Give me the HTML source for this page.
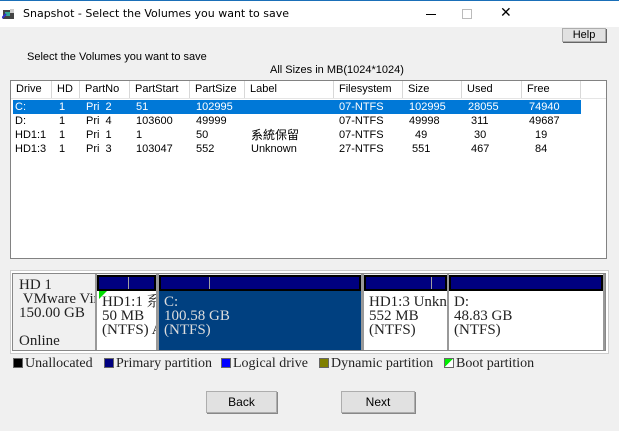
<!DOCTYPE html>
<html><head><meta charset="utf-8"><style>
*{margin:0;padding:0;box-sizing:border-box}
body{width:619px;height:431px;background:#f0f0f0;position:relative;overflow:hidden;font-family:"Liberation Sans","Noto Sans CJK TC",sans-serif;font-size:11px;color:#000}
.a{position:absolute;white-space:nowrap}
.serif{font-family:"Liberation Serif","Noto Serif CJK SC",serif}
.hd{position:absolute;top:81px;height:18px;border-right:1px solid #d8d8d8;padding-left:5px;line-height:17px;background:#fff}
.bar{position:absolute;top:275px;height:16px;background:#000;}
.bar i{position:absolute;left:2px;right:2px;top:2px;bottom:2px;background:#000080}
.bar b{position:absolute;top:2px;bottom:2px;width:1px;background:#a0a0a0}
.pt{position:absolute;top:291px;height:59px;font-size:15px;line-height:14px;padding:4px 0 0 5px;overflow:hidden;white-space:nowrap;font-family:"Liberation Serif","Noto Serif CJK SC",serif;color:#222}
.btn{position:absolute;top:391px;height:22px;background:#e1e1e1;border:1px solid #adadad;box-shadow:1px 1px 0 #888;text-align:center;line-height:20px;font-size:12px}
.lg{position:absolute;top:357px;height:14px;font-size:14px;font-family:"Liberation Serif",serif;color:#222;line-height:14px}
.sq{display:inline-block;width:10px;height:10px;border:1px solid #666;vertical-align:-1px;margin-right:2px}
</style></head><body>
<div class="a" style="left:0;top:0;width:619px;height:1px;background:#1a6fb8"></div>
<div class="a" style="left:0;top:1px;width:619px;height:26px;background:#fff"></div>
<svg class="a" style="left:2px;top:8px" width="14" height="12"><rect x="1" y="2" width="11" height="9" fill="#444"/><rect x="3" y="4" width="5" height="4" fill="#3a9"/><rect x="8" y="1" width="4" height="4" fill="#ccc"/><path d="M0 10l4-4" stroke="#33c" stroke-width="2"/></svg>
<div class="a" style="left:23px;top:7px;font-family:'DejaVu Sans',sans-serif;font-size:11px;color:#000">Snapshot - Select the Volumes you want to save</div>
<div class="a" style="left:426px;top:14px;width:10px;height:1px;background:#000"></div>
<div class="a" style="left:462px;top:9px;width:10px;height:10px;border:1px solid #bbb"></div>
<div class="a" style="left:500px;top:5px;font-size:14px;font-family:'DejaVu Sans',sans-serif;font-weight:200">✕</div>
<div class="btn" style="left:562px;top:28px;width:44px;height:14px;line-height:12px;font-size:11px;box-shadow:1px 1px 0 #666">Help</div>
<div class="a" style="left:27px;top:51px">Select the Volumes you want to save</div>
<div class="a" style="left:270px;top:64px">All Sizes in MB(1024*1024)</div>
<div class="a" style="left:10px;top:80px;width:597px;height:179px;background:#fff;border:1px solid #828282"></div>
<div class="hd" style="left:11px;width:41px">Drive</div>
<div class="hd" style="left:52px;width:28px">HD</div>
<div class="hd" style="left:80px;width:50px">PartNo</div>
<div class="hd" style="left:130px;width:60px">PartStart</div>
<div class="hd" style="left:190px;width:55px">PartSize</div>
<div class="hd" style="left:245px;width:89px">Label</div>
<div class="hd" style="left:334px;width:69px">Filesystem</div>
<div class="hd" style="left:403px;width:59px">Size</div>
<div class="hd" style="left:462px;width:60px">Used</div>
<div class="hd" style="left:522px;width:59px">Free</div>
<div class="a" style="left:11px;top:98px;width:595px;height:1px;background:#e5e5e5"></div>
<div class="a" style="left:13px;top:100px;width:568px;height:14px;background:#0078d7"></div>
<div class="a" style="left:0;top:100px;width:619px;line-height:14px">
<div style="position:relative;height:14px;color:#fff"><span class="a" style="left:15px">C:</span><span class="a" style="left:59px">1</span><span class="a" style="left:86px">Pri&nbsp;&nbsp;2</span><span class="a" style="left:136px">51</span><span class="a" style="left:196px">102995</span><span class="a" style="left:339px">07-NTFS</span><span class="a" style="left:409px">102995</span><span class="a" style="left:468px">28055</span><span class="a" style="left:529px">74940</span></div>
<div style="position:relative;height:14px"><span class="a" style="left:15px">D:</span><span class="a" style="left:59px">1</span><span class="a" style="left:86px">Pri&nbsp;&nbsp;4</span><span class="a" style="left:136px">103600</span><span class="a" style="left:196px">49999</span><span class="a" style="left:339px">07-NTFS</span><span class="a" style="left:409px">49998</span><span class="a" style="left:471px">311</span><span class="a" style="left:529px">49687</span></div>
<div style="position:relative;height:14px"><span class="a" style="left:15px">HD1:1</span><span class="a" style="left:59px">1</span><span class="a" style="left:86px">Pri&nbsp;&nbsp;1</span><span class="a" style="left:136px">1</span><span class="a" style="left:196px">50</span><span class="a" style="left:251px;font-size:12px">系統保留</span><span class="a" style="left:339px">07-NTFS</span><span class="a" style="left:415px">49</span><span class="a" style="left:474px">30</span><span class="a" style="left:535px">19</span></div>
<div style="position:relative;height:14px"><span class="a" style="left:15px">HD1:3</span><span class="a" style="left:59px">1</span><span class="a" style="left:86px">Pri&nbsp;&nbsp;3</span><span class="a" style="left:136px">103047</span><span class="a" style="left:196px">552</span><span class="a" style="left:251px">Unknown</span><span class="a" style="left:339px">27-NTFS</span><span class="a" style="left:412px">551</span><span class="a" style="left:471px">467</span><span class="a" style="left:535px">84</span></div>
</div>
<div class="a" style="left:10px;top:270px;width:599px;height:84px;background:#fff;border:1px solid #ccc"></div>
<div class="a" style="left:12px;top:273px;width:594px;height:78px;background:#f0f0f0;border:1px solid #888"></div>
<div class="a serif" style="left:19px;top:278px;width:76px;overflow:hidden;font-size:15px;line-height:14px;color:#222">HD 1<br>&nbsp;VMware Vir<br>150.00 GB</div>
<div class="a serif" style="left:19px;top:334px;font-size:15px;line-height:15px;color:#222">Online</div>
<div class="a" style="left:95px;top:274px;width:2px;height:76px;background:#999"></div>
<div class="bar" style="left:97px;width:59px"><i></i><b style="left:31px"></b></div>
<div class="pt" style="left:97px;width:59px;background:#fff">HD1:1 系<br>50 MB<br>(NTFS) A</div>
<div class="a" style="left:99px;top:291px;width:0;height:0;border-top:8px solid #0d0;border-right:8px solid transparent"></div>
<div class="a" style="left:156px;top:274px;width:3px;height:76px;background:#999"></div>
<div class="bar" style="left:159px;width:202px"><i></i><b style="left:50px"></b></div>
<div class="pt" style="left:159px;width:202px;background:#004080;color:#ddd">C:<br>100.58 GB<br>(NTFS)</div>
<div class="a" style="left:361px;top:274px;width:3px;height:76px;background:#999"></div>
<div class="bar" style="left:364px;width:83px"><i></i><b style="left:67px"></b></div>
<div class="pt" style="left:364px;width:83px;background:#fff">HD1:3 Unknown<br>552 MB<br>(NTFS)</div>
<div class="a" style="left:447px;top:274px;width:2px;height:76px;background:#999"></div>
<div class="bar" style="left:449px;width:154px"><i></i></div>
<div class="pt" style="left:449px;width:154px;background:#fff">D:<br>48.83 GB<br>(NTFS)</div>
<div class="a" style="left:603px;top:274px;width:2px;height:76px;background:#999"></div>
<div class="lg" style="left:13px"><span class="sq" style="background:#000"></span>Unallocated</div>
<div class="lg" style="left:104px"><span class="sq" style="background:#000080"></span>Primary partition</div>
<div class="lg" style="left:221px"><span class="sq" style="background:#0000ff"></span>Logical drive</div>
<div class="lg" style="left:319px"><span class="sq" style="background:#808000"></span>Dynamic partition</div>
<div class="lg" style="left:444px"><span class="sq" style="background:linear-gradient(135deg,#0e0 50%,#fff 50%)"></span>Boot partition</div>
<div class="btn" style="left:206px;width:71px">Back</div>
<div class="btn" style="left:341px;width:74px">Next</div>
</body></html>
